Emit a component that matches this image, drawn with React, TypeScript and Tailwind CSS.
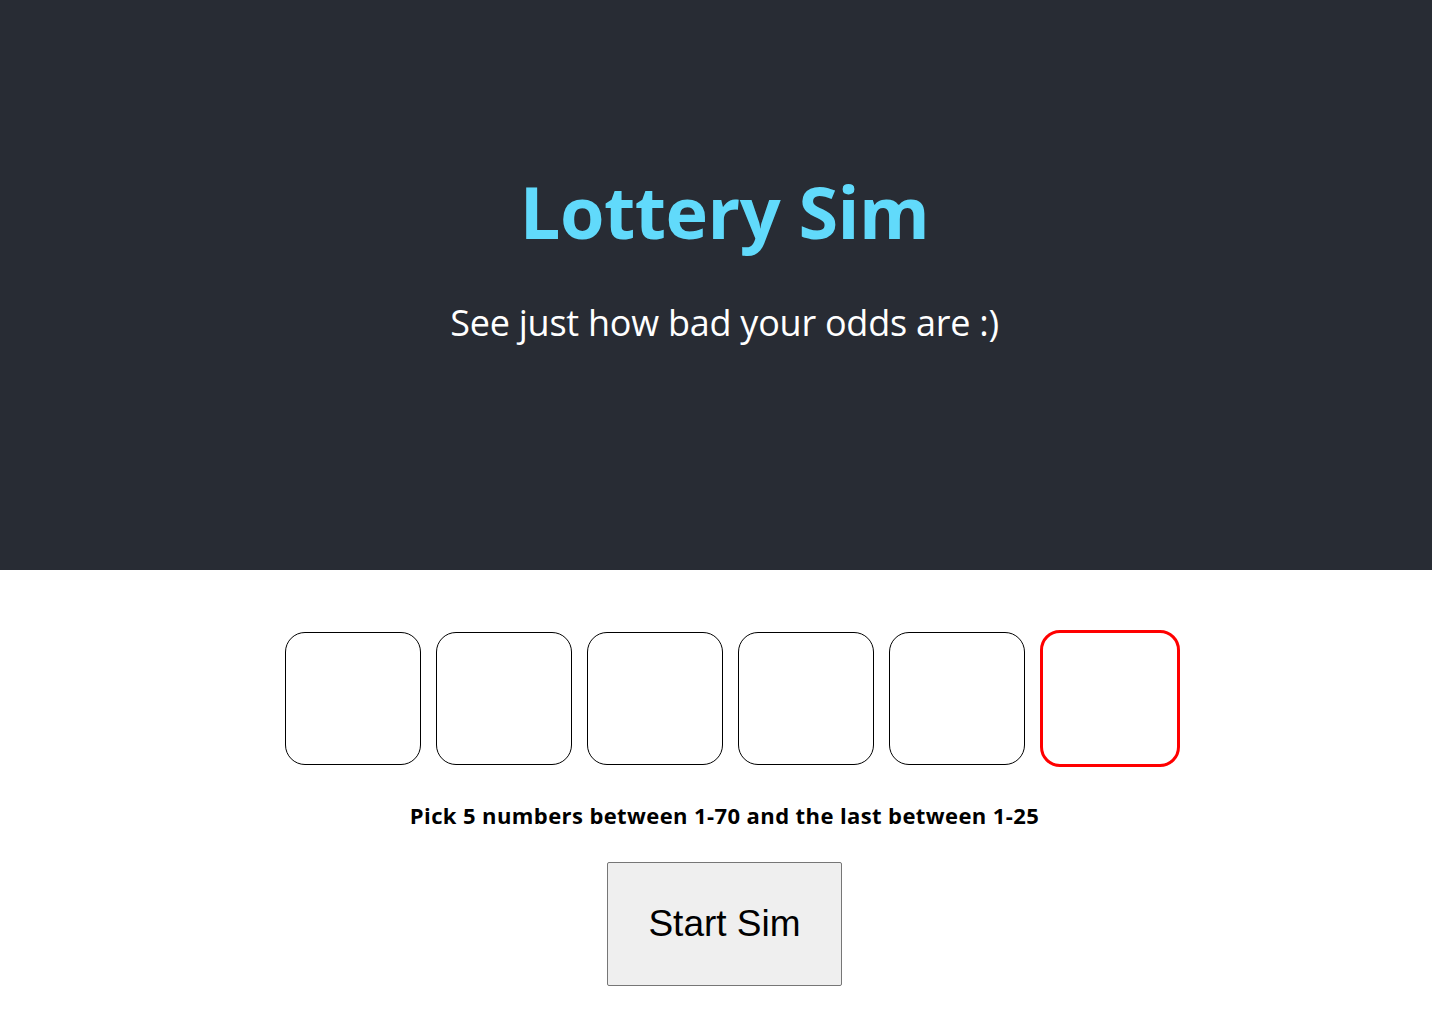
export default function App() {
    const boxes = [0, 1, 2, 3, 4];

    return (
        <div className="min-h-screen bg-white font-['Open_Sans',sans-serif]">
            <header className="h-[570px] bg-[#282c34] flex flex-col items-center pt-[163px] pl-[17px]">
                <h1 className="text-[72px] leading-[96px] font-bold text-[#61dafb] tracking-[-0.5px]">
                    Lottery Sim
                </h1>
                <p className="mt-[40px] text-[36px] leading-[48px] text-white tracking-[-0.25px]">
                    See just how bad your odds are :)
                </p>
            </header>
            <main className="flex flex-col items-center pl-[17px]">
                <div className="flex gap-[15px] items-center mt-[60px] pl-[16px]">
                    {boxes.map(i => (
                        <input
                            key={i}
                            type="text"
                            className="w-[136px] h-[133px] rounded-[20px] border border-black outline-none text-center text-4xl"
                        />
                    ))}
                    <input
                        type="text"
                        className="w-[140px] h-[137px] rounded-[20px] border-[3px] border-[#ff0000] outline-none text-center text-4xl"
                    />
                </div>
                <div className="mt-[34px] text-[22px] leading-[28px] font-bold text-black tracking-[0.4px]">
                    Pick 5 numbers between 1-70 and the last between 1-25
                </div>
                <button className="mt-[33px] w-[235px] h-[124px] bg-[#efefef] border border-[#767676] rounded-[2px] font-['Liberation_Sans',Arial,sans-serif] text-[37px] text-black">
                    Start Sim
                </button>
            </main>
        </div>
    )
}
